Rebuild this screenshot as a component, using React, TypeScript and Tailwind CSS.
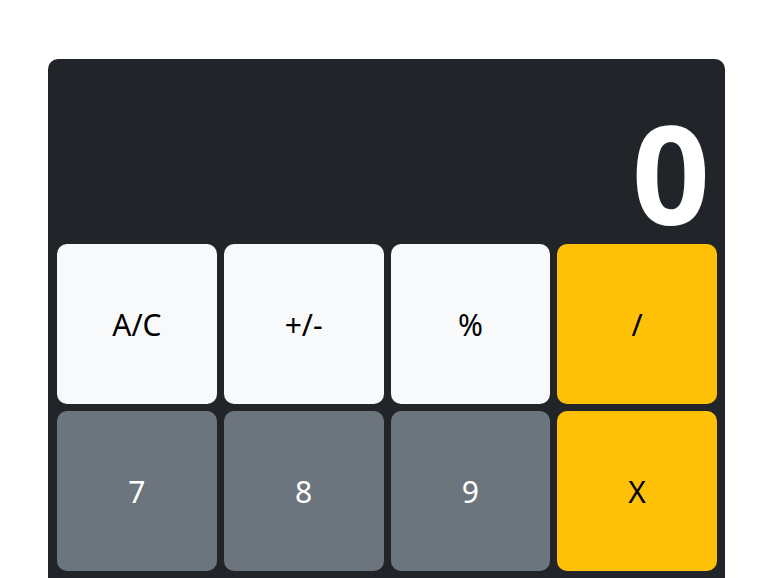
import React, { useState } from "react";

type Key = { label: string; kind: "light" | "secondary" | "warning" };

const keys: Key[] = [
  { label: "A/C", kind: "light" },
  { label: "+/-", kind: "light" },
  { label: "%", kind: "light" },
  { label: "/", kind: "warning" },
  { label: "7", kind: "secondary" },
  { label: "8", kind: "secondary" },
  { label: "9", kind: "secondary" },
  { label: "X", kind: "warning" },
  { label: "4", kind: "secondary" },
  { label: "5", kind: "secondary" },
  { label: "6", kind: "secondary" },
  { label: "-", kind: "warning" },
  { label: "1", kind: "secondary" },
  { label: "2", kind: "secondary" },
  { label: "3", kind: "secondary" },
  { label: "+", kind: "warning" },
];

const kindClass = {
  light: "bg-[#f8f9fa] text-black",
  secondary: "bg-[#6c757d] text-white",
  warning: "bg-[#ffc107] text-black",
};

const App: React.FC = () => {
  const [display, setDisplay] = useState("0");

  const handleClick = (label: string) => {
    if (label === "A/C") setDisplay("0");
  };

  return (
    <div className="min-h-screen bg-white pt-[59px] px-[48px] font-['Noto_Sans','Open_Sans',sans-serif]">
      <div className="w-[677px] rounded-[10px] bg-[#212529] px-[9px] pr-[8px] pb-2">
        <div className="h-[185px] flex items-end justify-end pr-[7px] pb-[3px]">
          <span className="text-[137px] font-bold leading-none text-white">{display}</span>
        </div>
        <div className="grid grid-cols-4 gap-[7px]">
          {keys.map((k) => (
            <button
              key={k.label}
              onClick={() => handleClick(k.label)}
              className={`h-[160px] rounded-[10px] text-[30px] flex items-center justify-center ${kindClass[k.kind]}`}
            >
              {k.label}
            </button>
          ))}
        </div>
      </div>
    </div>
  );
};

export default App;
